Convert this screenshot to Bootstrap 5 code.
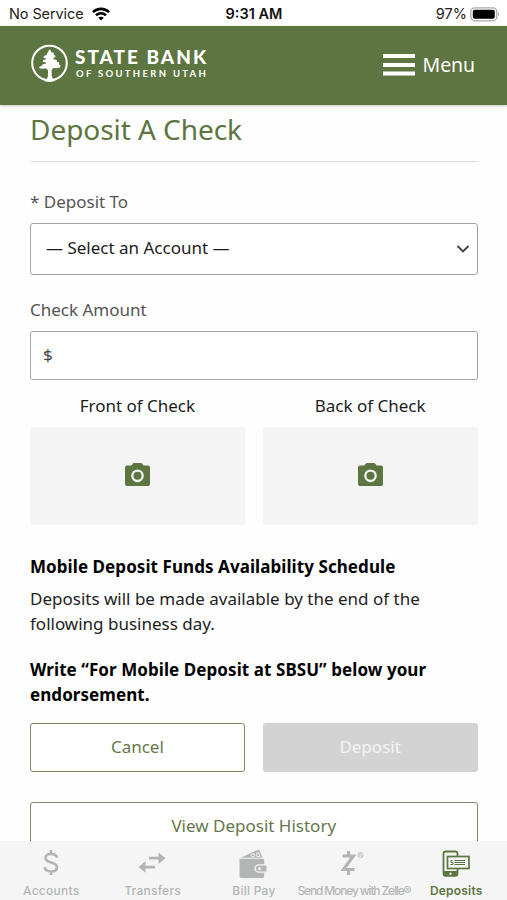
<!DOCTYPE html>
<html lang="en">
<head>
<meta charset="utf-8">
<meta name="viewport" content="width=device-width, initial-scale=1">
<title>Deposit A Check</title>
<link href="https://cdn.jsdelivr.net/npm/bootstrap@5.3.0/dist/css/bootstrap.min.css" rel="stylesheet">
<style>
  :root { --bank-green: #5d7540; }
  body { font-family: "Noto Sans", sans-serif; font-size: 17px; line-height: 24px; color: #1c1c1c; background: #fefefe; }
  svg { display: block; flex-shrink: 0; }
  .status-bar { height: 26px; padding: 2px 7px 0 9px; font-family: Inter, sans-serif; font-size: 14.5px; line-height: 24px; color: #222; background: #fff; }
  .status-bar > div { flex: 1 1 0; }
  .status-left { letter-spacing: -.1px; }
  .status-time { font-weight: 600; color: #111; padding-right: 1px; }
  .battery { margin-left: 3px; }
  .bank-header { height: 80px; padding: 0 32px 4px 31px; background: var(--bank-green); box-shadow: 0 1px 3px rgba(60,80,40,.3); z-index: 1; }
  .bank-name { font-family: Lato, sans-serif; color: #fff; white-space: nowrap; padding-bottom: 1px; }
  .bank-line1 { font-size: 19px; font-weight: 900; line-height: 22px; letter-spacing: 2px; margin-left: -2px; }
  .bank-line2 { font-size: 9.5px; font-weight: 700; line-height: 11px; letter-spacing: 2.3px; margin-left: -1px; }
  .bank-line1, .bank-line2 { display: block; }
  .menu-btn { font-size: 19.5px; color: #fff; gap: 8px; letter-spacing: -.1px; }
  .page-main { padding: 5px 29.5px 0 30px; }
  .page-title { font-size: 28px; line-height: 38px; font-weight: 400; letter-spacing: -.05px; color: var(--bank-green); margin: 0 0 13px; }
  .title-rule { height: 1px; background: #dedede; margin-bottom: 28px; }
  .field-label { color: #555; margin-bottom: 9px; display: block; }
  .field-box { border: 1.5px solid #a4a4a4; border-radius: 3px; background: #fff; }
  .account-select { height: 52px; padding: 0 7px 2px 15px; margin-bottom: 23px; }
  .amount-box { height: 49px; padding: 0 12px; margin-bottom: 14px; color: #444; }
  .two-up { display: grid; grid-template-columns: 1fr 1fr; gap: 18px; }
  .photo-tile { height: 98px; margin-top: 9px; padding-bottom: 3px; background: #f4f4f4; border-radius: 2px; color: var(--bank-green); }
  .notes { padding-top: 29px; line-height: 25.6px; color: #222; }
  .notes strong { display: block; color: #000; letter-spacing: .07px; }
  .notes p { margin: 6px 0 20px; }
  .form-actions { margin-top: 15px; }
  .history-btn { margin-top: 30px; }
  .form-btn { height: 49px; border-radius: 3px; font-size: 17px; padding: 0; line-height: 24px; }
  .btn-line { border: 1.5px solid #7b8b62; color: #66784b; background: #fff; }
  .btn-off, .btn-off:disabled { background: #d3d3d3; border: 0; color: #f3f3f3; opacity: 1; }
  .tab-bar { height: 60px; background: #f5f5f5; color: #b3b5b4; font-family: Inter, sans-serif; font-size: 12px; font-weight: 500; line-height: 16px; z-index: 1; }
  .tab-cell { width: 20%; padding: 9px 0 0 1px; white-space: nowrap; letter-spacing: .25px; }
  .tab-icon { height: 33px; padding-right: 1px; }
  .tab-zelle { letter-spacing: -1.15px; padding: 9px 2px 0 0; }
  .tab-current { color: var(--bank-green); font-weight: 600; letter-spacing: .2px; padding-left: 0; }
</style>
<script src="https://cdn.jsdelivr.net/npm/bootstrap@5.3.0/dist/js/bootstrap.bundle.min.js"></script>
</head>
<body>
<div class="vh-100 d-flex flex-column overflow-hidden">
  <div class="status-bar d-flex align-items-center">
    <div class="status-left d-flex align-items-center">
      <span>No Service</span>
      <svg class="ms-2" width="18" height="14" viewBox="0 0 18 14" fill="none" stroke="#000" stroke-width="2.6"><path d="M1 5.2C5.4.8 12.6.8 17 5.2M4 8.3c2.8-2.8 7.2-2.8 10 0"/><path d="M9 13.6 6.2 10.8c1.5-1.5 4.1-1.5 5.6 0z" fill="#000" stroke="none"/></svg>
    </div>
    <div class="status-time text-center">9:31 AM</div>
    <div class="d-flex align-items-center justify-content-end">
      <span>97%</span>
      <svg class="battery" width="30" height="15" viewBox="0 0 30 15"><rect x=".8" y=".8" width="26" height="13" rx="4" fill="#fff" stroke="#aaa" stroke-width="1.3"/><rect x="2.8" y="2.8" width="22" height="9" rx="2" fill="#000"/><path d="M28 5q2 2.3 0 4.6z" fill="#aaa"/></svg>
    </div>
  </div>

  <header class="bank-header d-flex align-items-center justify-content-between">
    <div class="d-flex align-items-center">
      <svg width="38" height="38" viewBox="0 0 38 38"><circle cx="18.5" cy="19" r="17.3" fill="none" stroke="#fff" stroke-width="2"/><path fill="#fff" d="M18.3 5.5 19.6 6l.4 2 3 1-.2 2 1.8.7-.5 1.5-2 .8.4 1.2 3.2.8.2 1.6 2.5 1.2-.5 1.5 1.8 1.6-.8 1.6-3 .7-3.7-.3-1.6 2 .1 5.5 1 3 2.8 2.7-5.700.8-5.700-.7 3-2.700 1-3-.1-5.200-2.100-2-4 .5-2.800-.7.600-1.600 2.200-.7.700-1.500 3.600-.8-.3-1-3.200-.8.500-1.600 2.200-.6.400-1.200-2.300-.7.200-1.500 2.600-.8z"/></svg>
      <div class="bank-name ms-2">
        <span class="bank-line1">STATE BANK</span>
        <span class="bank-line2">OF SOUTHERN UTAH</span>
      </div>
    </div>
    <div class="menu-btn d-flex align-items-center pt-1">
      <svg width="32" height="24" viewBox="0 0 32 24" fill="#fff"><path d="M0 1h32v4H0zM0 10h32v4H0zM0 18.500h32v4H0z"/></svg>
      <span>Menu</span>
    </div>
  </header>

  <main class="page-main flex-grow-1 overflow-hidden">
    <h1 class="page-title">Deposit A Check</h1>
    <div class="title-rule"></div>
    <span class="field-label">* Deposit To</span>
    <div class="field-box account-select d-flex align-items-center justify-content-between">
      <span>— Select an Account —</span>
      <svg class="mt-1" width="14" height="10" viewBox="0 0 14 10" fill="none" stroke="#444" stroke-width="2"><path d="m1.500 1 5.500 5.400L12.500 1"/></svg>
    </div>
    <span class="field-label">Check Amount</span>
    <div class="field-box amount-box d-flex align-items-center">$</div>

    <div class="two-up text-center">
      <div>
        <div>Front of Check</div>
        <div class="photo-tile d-flex align-items-center justify-content-center">
          <svg width="25" height="23" viewBox="0 0 25 23"><path fill="currentColor" d="M8.500 0h8l2.200 2.600H23a2 2 0 0 1 2 2V21a2 2 0 0 1-2 2H2a2 2 0 0 1-2-2V4.600a2 2 0 0 1 2-2h4.300z"/><circle cx="12.500" cy="12.800" r="5.200" fill="none" stroke="#f4f4f4" stroke-width="2.300"/></svg>
        </div>
      </div>
      <div>
        <div>Back of Check</div>
        <div class="photo-tile d-flex align-items-center justify-content-center">
          <svg width="25" height="23" viewBox="0 0 25 23"><path fill="currentColor" d="M8.500 0h8l2.200 2.600H23a2 2 0 0 1 2 2V21a2 2 0 0 1-2 2H2a2 2 0 0 1-2-2V4.600a2 2 0 0 1 2-2h4.300z"/><circle cx="12.500" cy="12.800" r="5.200" fill="none" stroke="#f4f4f4" stroke-width="2.300"/></svg>
        </div>
      </div>
    </div>

    <div class="notes">
      <strong>Mobile Deposit Funds Availability Schedule</strong>
      <p>Deposits will be made available by the end of the following business day.</p>
      <strong>Write “For Mobile Deposit at SBSU” below your endorsement.</strong>
    </div>

    <div class="two-up form-actions">
      <button class="btn form-btn btn-line">Cancel</button>
      <button class="btn form-btn btn-off" disabled>Deposit</button>
    </div>
    <button class="btn form-btn btn-line history-btn w-100">View Deposit History</button>
  </main>

  <nav class="tab-bar d-flex text-center">
    <div class="tab-cell">
      <div class="tab-icon d-flex justify-content-center"><svg width="16" height="26" viewBox="0 0 16 26" fill="none" stroke="currentColor" stroke-width="2.600"><path d="M14 7.800C13.600 5.200 11.300 4 8 4 4.500 4 2.500 5.500 2.500 8c0 6 11.500 3 11.500 9.200C14 20 11.500 21.500 8 21.500c-3.700 0-6-1.500-6.300-4.300M8 0v4.500M8 21v4"/></svg></div>
      <div>Accounts</div>
    </div>
    <div class="tab-cell">
      <div class="tab-icon d-flex justify-content-center"><svg width="28" height="26" viewBox="0 0 28 26" fill="currentColor"><path d="M11 6.800h9.500V2.500l7 5.700-7 5.700V9.500H11zM17 15.700H7.500v-4.400l-7 5.700 7 5.700v-4.200H17z"/></svg></div>
      <div>Transfers</div>
    </div>
    <div class="tab-cell">
      <div class="tab-icon d-flex justify-content-center"><svg width="30" height="29" viewBox="0 0 30 29" fill="currentColor"><path d="M3 7.800 18.500.3h3l3 7.500z"/><ellipse cx="14.800" cy="5.200" rx="1.800" ry="1.500" fill="none" stroke="#f5f5f5"/><path d="m18.500 3 2-.5 1.500 4h-3z" fill="none" stroke="#f5f5f5" stroke-width=".9"/><path d="M1.500 8.700h23.200a1.500 1.500 0 0 1 1.500 1.500v4h-5.500a4.300 4.300 0 0 0 0 8.600h5.500V26a2 2 0 0 1-2 2H3.500a2 2 0 0 1-2-2z"/><path d="M20.800 15.500h7.700v6h-7.700a3 3 0 0 1 0-6z"/><circle cx="21.500" cy="18.500" r="1.500" fill="#f5f5f5"/></svg></div>
      <div>Bill Pay</div>
    </div>
    <div class="tab-cell tab-zelle d-flex flex-column align-items-center">
      <div class="tab-icon d-flex"><svg width="24" height="27" viewBox="0 0 24 27" fill="none" stroke="currentColor"><path stroke-width="3.200" d="M1.500 6h10.800L2.500 19.500h11"/><path stroke-width="3" d="M7.500 1v4M7.500 20v5"/><circle cx="19.500" cy="5" r="2.600" stroke-width=".8"/><path stroke-width=".7" d="M18.700 6.600V3.500h1.100q.8.800 0 1.600h-1.100m1 0 .8 1.500"/></svg></div>
      <div>Send Money with Zelle®</div>
    </div>
    <div class="tab-cell tab-current">
      <div class="tab-icon d-flex justify-content-center"><svg width="28" height="28" viewBox="0 0 28 28"><rect x="1.500" y="1.500" width="14" height="24" rx="2.300" fill="none" stroke="currentColor" stroke-width="1.800"/><path d="M1 21h15v3.400a2 2 0 0 1-2 2H3a2 2 0 0 1-2-2z" fill="currentColor"/><circle cx="8.500" cy="23.700" r="1.200" fill="#f5f5f5"/><rect x="5.500" y="6.500" width="21.500" height="12" fill="#f5f5f5" stroke="currentColor" stroke-width="1.700"/><path d="M10.500 10.500H9v2h2v2H8.500M12.500 10.500h10.500M12.500 12.500h10.500M12.500 14.500h10.500" fill="none" stroke="currentColor" stroke-width="1"/></svg></div>
      <div>Deposits</div>
    </div>
  </nav>
</div>
</body>
</html>
